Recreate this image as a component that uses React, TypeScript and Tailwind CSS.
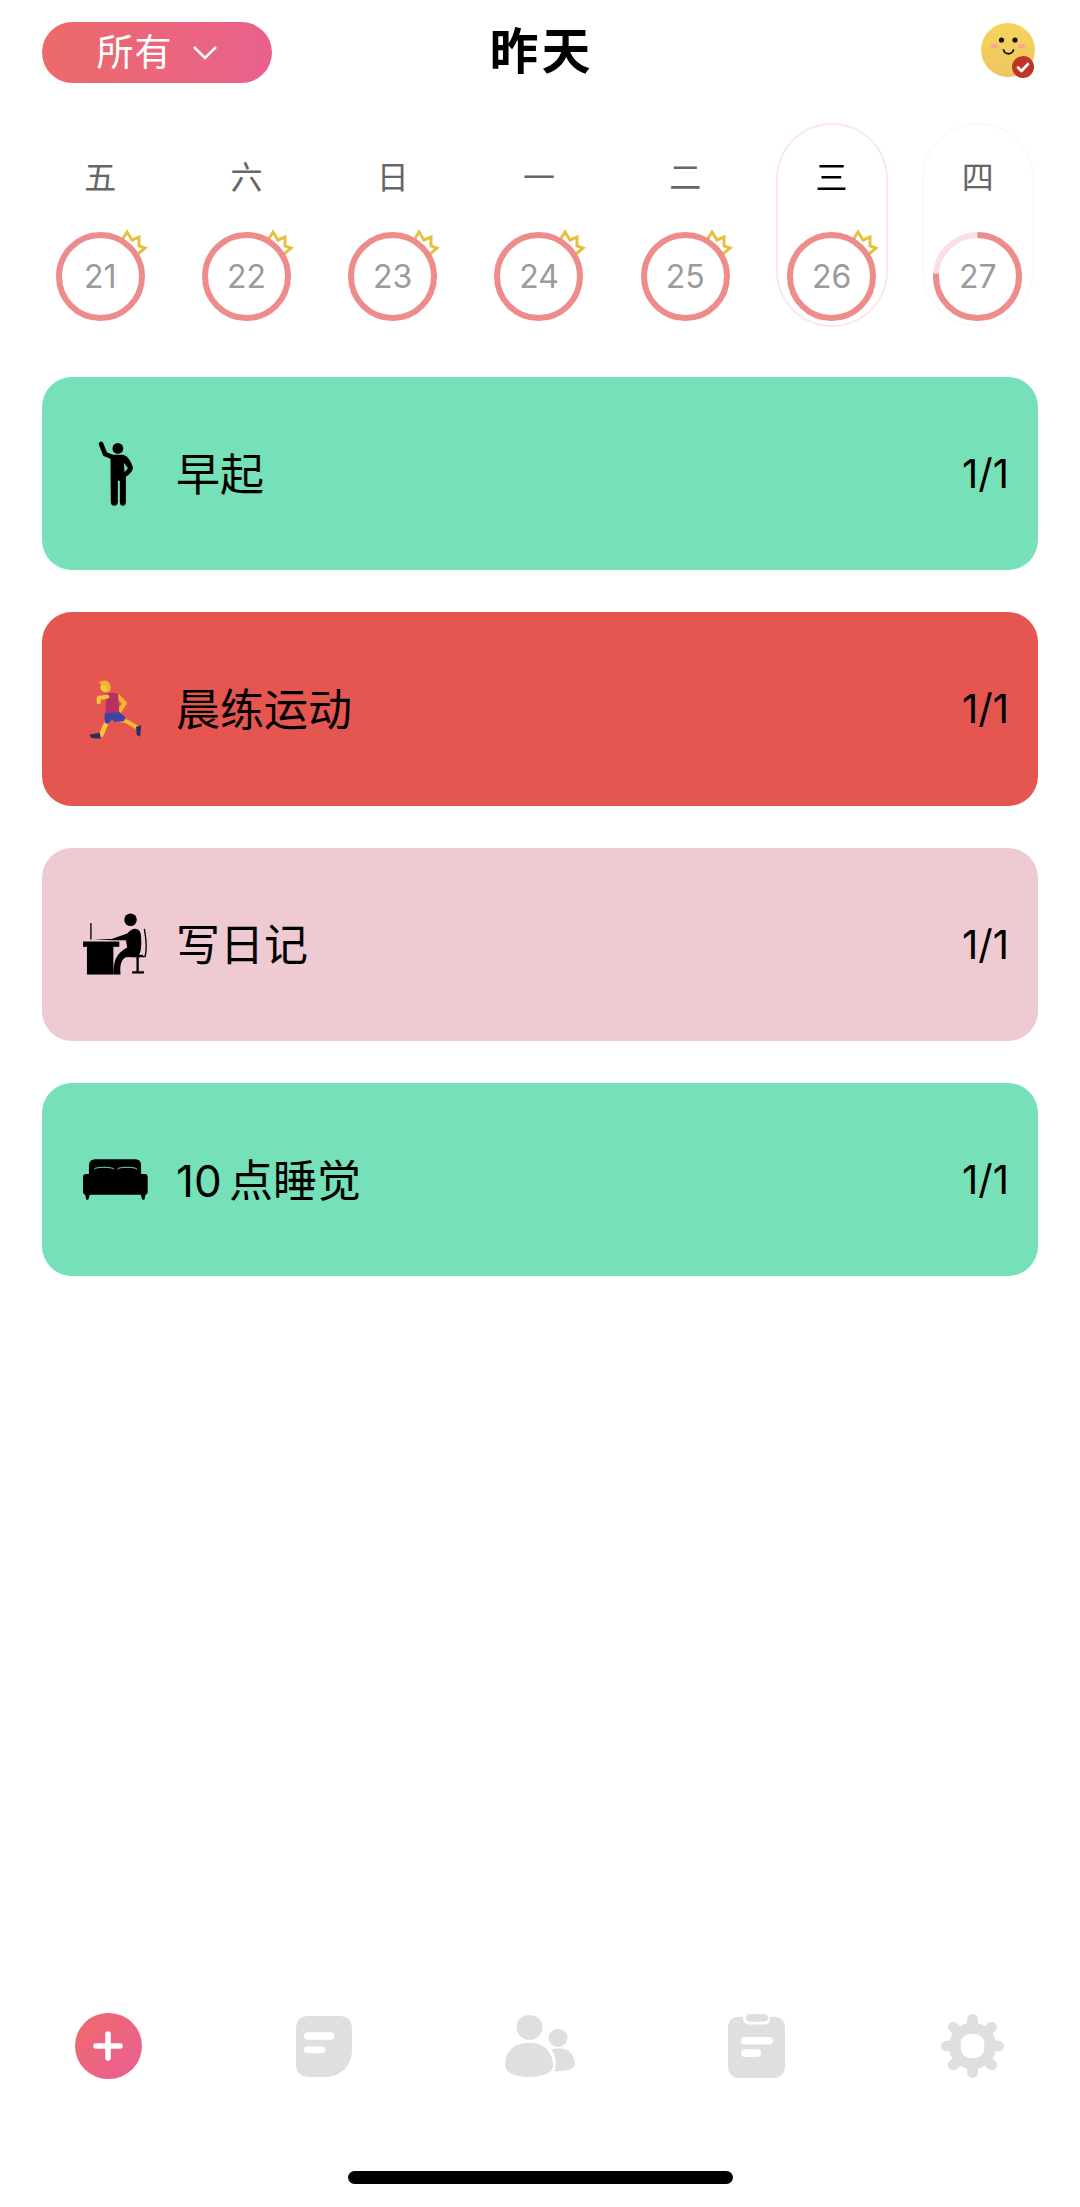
import React from "react";

const days = [
  { w: "五", d: 21 },
  { w: "六", d: 22 },
  { w: "日", d: 23 },
  { w: "一", d: 24 },
  { w: "二", d: 25 },
  { w: "三", d: 26, selected: true },
  { w: "四", d: 27, partial: true },
];

function Ring({ d, partial }: { d: number; partial?: boolean }) {
  const r = 41.5;
  const c = 2 * Math.PI * r;
  return (
    <div className="relative w-[89px] h-[89px]">
      <svg width="89" height="89" viewBox="0 0 89 89" className="absolute inset-0 overflow-visible">
        {!partial && (
          <path
            d="M66 8 L71 0 L76 8 L83 5 L83 14 L89 16 L82 22"
            fill="none"
            stroke="#e6c040"
            strokeWidth="3"
            strokeLinejoin="miter"
          />
        )}
        <circle cx="44.5" cy="44.5" r={r} fill="#fff" stroke={partial ? "#fadfe7" : "#ee8c8c"} strokeWidth="6" />
        {partial && (
          <circle
            cx="44.5"
            cy="44.5"
            r={r}
            fill="none"
            stroke="#ee8c8c"
            strokeWidth="6"
            strokeDasharray={`${c * 0.76} ${c}`}
            transform="rotate(-90 44.5 44.5)"
          />
        )}
      </svg>
      <div className="absolute inset-0 flex items-center justify-center text-[32px] leading-none text-[#9b9b9b]">{d}</div>
    </div>
  );
}

function Person() {
  return (
    <svg width="37" height="67" viewBox="170 210 110 200" fill="#000">
      <circle cx="232" cy="235" r="16" />
      <path d="M182 222 L194 252 L218 262" fill="none" stroke="#000" strokeWidth="14" strokeLinecap="round" strokeLinejoin="round" />
      <path d="M210 254 H248 C262 258 270 272 277 292 C278 300 268 312 256 320 V396 C256 410 238 410 238 396 V332 H232 V396 C232 410 211 410 211 396 Z" />
      <path d="M250 278 L262 294 L252 306 Z" fill="#76e0b8" />
    </svg>
  );
}

function Runner() {
  return (
    <svg width="55" height="60" viewBox="140 925 165 180">
      <path d="M222 1045 L255 1052 L290 1072" fill="none" stroke="#f5b82e" strokeWidth="12" strokeLinejoin="round" strokeLinecap="round" />
      <path d="M200 1045 L180 1092" fill="none" stroke="#f7c53a" strokeWidth="14" strokeLinecap="round" />
      <path d="M225 972 L250 998 L232 1024" fill="none" stroke="#f5b82e" strokeWidth="13" strokeLinejoin="round" strokeLinecap="round" />
      <path d="M196 968 L230 966 L234 1026 L192 1030 Z" fill="#b3325f" />
      <path d="M198 978 L172 982 L172 995" fill="none" stroke="#f7c53a" strokeWidth="12" strokeLinejoin="round" strokeLinecap="round" />
      <path d="M190 1028 L234 1024 L252 1040 L248 1052 L220 1054 L212 1046 L200 1060 L190 1056 Z" fill="#3f43a8" />
      <path d="M144 1092 L176 1086 L178 1104 L150 1102 Z" fill="#27305e" />
      <path d="M284 1068 L300 1064 L296 1098 L286 1092 Z" fill="#27305e" />
      <circle cx="192" cy="950" r="15" fill="#f7c53a" />
      <path d="M172 938 C180 926 206 924 208 948 C208 958 204 964 200 966 L196 946 Z" fill="#eeb32a" />
    </svg>
  );
}

function Desk() {
  return (
    <svg width="67" height="66" viewBox="125 213 203 197" fill="#000">
      <circle cx="272" cy="238" r="19" />
      <rect x="150" y="248" width="4" height="50" />
      <rect x="128" y="304" width="110" height="16" />
      <rect x="140" y="318" width="80" height="86" />
      <path d="M160 296 H215 L262 280 C280 256 304 262 304 290 C306 320 304 345 290 350 L258 352 C240 360 240 385 242 404 H220 C220 370 225 340 262 322 L258 300 L215 300 Z" />
      <path d="M314 266 C320 300 322 330 316 350 H272" fill="none" stroke="#000" strokeWidth="4" />
      <rect x="272" y="344" width="38" height="7" />
      <rect x="290" y="350" width="7" height="45" />
      <rect x="277" y="394" width="36" height="7" />
    </svg>
  );
}

function Bed() {
  return (
    <svg width="67" height="43" viewBox="125 955 203 128" fill="#000">
      <path d="M146 1004 V978 C146 964 154 958 168 958 H284 C298 958 304 964 304 978 V1004 Z" />
      <path d="M162 988 C164 980 218 980 222 988 M232 988 C234 980 288 980 292 988" fill="none" stroke="#76e0b8" strokeWidth="3" />
      <rect x="128" y="1002" width="196" height="63" rx="9" />
      <path d="M134 1062 H150 L144 1080 H138 Z M302 1062 H318 L314 1080 H308 Z" />
    </svg>
  );
}

const items = [
  { name: "早起", bg: "bg-[#76e0b8]", icon: <Person /> },
  { name: "晨练运动", bg: "bg-[#e55650]", icon: <Runner /> },
  { name: "写日记", bg: "bg-[#eecad3]", icon: <Desk /> },
  { name: "10 点睡觉", bg: "bg-[#76e0b8]", icon: <Bed /> },
];

function Avatar() {
  return (
    <svg width="56" height="58" viewBox="0 0 56 58">
      <defs>
        <linearGradient id="face" x1="0" y1="0" x2="0" y2="1">
          <stop offset="0" stopColor="#f6d45a" />
          <stop offset="1" stopColor="#efc562" />
        </linearGradient>
      </defs>
      <circle cx="27" cy="27" r="27" fill="url(#face)" />
      <circle cx="20.5" cy="17" r="2.6" fill="#111" />
      <circle cx="34" cy="17" r="2.6" fill="#111" />
      <ellipse cx="13.5" cy="23" rx="4" ry="2" fill="#f5a98f" />
      <ellipse cx="40.5" cy="23" rx="4" ry="2" fill="#f5a98f" />
      <path d="M22.5 27 C24.5 32 30.5 32 32.5 27" fill="none" stroke="#111" strokeWidth="1.8" strokeLinecap="round" />
      <circle cx="42" cy="44" r="11" fill="#bf3527" />
      <path d="M37 44.5 L40.5 48 L47 41" fill="none" stroke="#fff" strokeWidth="2.6" strokeLinecap="round" strokeLinejoin="round" />
    </svg>
  );
}

function Plus() {
  return (
    <div className="w-[67px] h-[66px] rounded-full bg-gradient-to-br from-[#ef6a66] to-[#e95f97] flex items-center justify-center">
      <svg width="30" height="30" viewBox="0 0 30 30">
        <path d="M15 3 V27 M3 15 H27" stroke="#fff" strokeWidth="5.5" strokeLinecap="round" />
      </svg>
    </div>
  );
}

function Note() {
  return (
    <svg width="56" height="61" viewBox="0 0 57 64" preserveAspectRatio="none">
      <path d="M13 0 H44 C52 0 57 5 57 13 V36 C57 52 45 64 30 64 H13 C5 64 0 59 0 51 V13 C0 5 5 0 13 0 Z" fill="#dfdfdf" />
      <rect x="8" y="17" width="31" height="8" rx="4" fill="#fff" />
      <rect x="8" y="32" width="22" height="7" rx="3.5" fill="#fff" />
    </svg>
  );
}

function Users() {
  return (
    <svg width="70" height="64" viewBox="0 0 70 67" preserveAspectRatio="none" fill="#dfdfdf">
      <circle cx="24.5" cy="14" r="13" />
      <path d="M0 54 C0 38 10 30 24.5 30 C39 30 48 40 48 54 C48 63 34 66 24 66 C12 66 0 62 0 54 Z" />
      <circle cx="53" cy="25" r="9.5" />
      <path d="M46 37 C50 36 54 36 56 36 C65 36 70 45 70 52 C70 58 60 60 49 60 C52 52 51 43 46 37 Z" />
    </svg>
  );
}

function Clip() {
  return (
    <svg width="57" height="64" viewBox="0 0 57 67" preserveAspectRatio="none">
      <path d="M15 3 C15 10 18 11 22 11 H36 C40 11 42 10 42 3 H46 C53 3 57 8 57 14 V55 C57 62 52 67 46 67 H11 C4 67 0 62 0 55 V14 C0 8 4 3 11 3 Z" fill="#dfdfdf" />
      <rect x="18" y="0" width="22" height="8" rx="4" fill="#dfdfdf" />
      <rect x="13" y="24" width="32" height="8" rx="4" fill="#fff" />
      <rect x="13" y="37" width="20" height="8" rx="4" fill="#fff" />
    </svg>
  );
}

function Gear() {
  return (
    <svg width="63" height="64" viewBox="-32 -33 64 66" preserveAspectRatio="none">
      <circle r="24" fill="#dfdfdf" />
      <g stroke="#dfdfdf" strokeWidth="11" strokeLinecap="round">
        <path d="M0 -27.5 V-20 M0 27.5 V20 M-26.5 0 H-20 M26.5 0 H20 M-19.5 -19.5 L-15 -15 M19.5 -19.5 L15 -15 M-19.5 19.5 L-15 15 M19.5 19.5 L15 15" />
      </g>
      <rect x="-12" y="-12.5" width="24" height="25" rx="10" fill="#fff" />
    </svg>
  );
}

export default function App() {
  return (
    <div className="w-[1080px] h-[2207px] bg-white flex flex-col font-['Inter','Noto_Sans_CJK_SC',sans-serif] text-black overflow-hidden">
      <header className="h-[123px] pl-[42px] pr-[43px] pt-[22px] grid grid-cols-[1fr_auto_1fr] items-start">
        <div className="w-[230px] h-[61px] rounded-full bg-gradient-to-r from-[#ec6a68] to-[#e9618c] flex items-center justify-center gap-[19px] text-white text-[37px] font-normal">
          <span className="tracking-[1px]">所有</span>
          <svg width="26" height="16" viewBox="0 0 26 16">
            <path d="M2 2 L13 13 L24 2" fill="none" stroke="#fff" strokeWidth="2.5" />
          </svg>
        </div>
        <h1 className="text-[49px] leading-[59px] font-bold tracking-[3px] translate-x-[2px]">昨天</h1>
        <div className="justify-self-end pt-[1px]">
          <Avatar />
        </div>
      </header>

      <section className="pl-[27px] pr-[29px] grid grid-cols-7">
        {days.map((x) => (
          <div key={x.d} className="flex justify-center">
            <div
              className={`w-[112px] h-[204px] rounded-full border-2 flex flex-col items-center pt-[33px] ${
                x.selected ? "border-[#fce6ec]" : x.partial ? "border-[#fafafa]" : "border-transparent"
              }`}
            >
              <div className={`text-[32px] leading-[40px] ${x.selected ? "text-black" : "text-[#666]"}`}>{x.w}</div>
              <div className="mt-[34px]">
                <Ring d={x.d} partial={x.partial} />
              </div>
            </div>
          </div>
        ))}
      </section>

      <main className="pt-[50px] px-[42px] flex flex-col gap-[42px]">
        {items.map((it) => (
          <div key={it.name} className={`h-[193.33px] rounded-[30px] ${it.bg} flex items-center pr-[29px]`}>
            <div className="w-[134px] pl-[40px] flex justify-start">
              <div className="w-[67px] flex justify-center">{it.icon}</div>
            </div>
            <div className="flex-1 text-[44px] leading-none pt-[2px] [word-spacing:-5px]">{it.name}</div>
            <div className="text-[40px] leading-none pt-[1px]">1/1</div>
          </div>
        ))}
      </main>

      <nav className="mt-auto grid grid-cols-5 h-[70px] items-center justify-items-center">
        <Plus />
        <Note />
        <Users />
        <Clip />
        <Gear />
      </nav>
      <div className="h-[126px] flex justify-center pt-[90px]">
        <div className="w-[385px] h-[13px] rounded-full bg-black" />
      </div>
    </div>
  );
}
